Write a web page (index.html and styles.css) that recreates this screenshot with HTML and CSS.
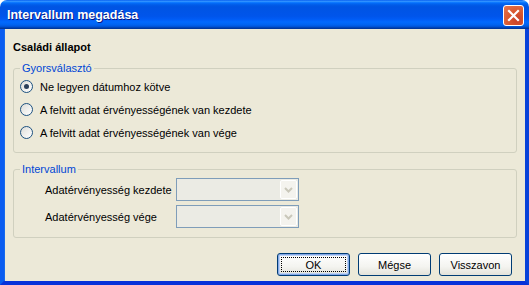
FILE: index.html
```html
<!DOCTYPE html>
<html lang="hu">
<head>
    <meta charset="UTF-8">
    <title>Intervallum megadása</title>
    <link rel="stylesheet" href="styles.css">
</head>
<body>
    <div class="window">
        <div class="titlebar">
            <span class="title">Intervallum megadása</span>
            <div class="close">
                <svg width="13" height="13" viewBox="0 0 13 13">
                    <path d="M2 2 L11 11 M11 2 L2 11" stroke="#fff" stroke-width="2.2" stroke-linecap="square"/>
                </svg>
            </div>
        </div>
        <div class="frame">
            <div class="heading">Családi állapot</div>

            <fieldset class="group">
                <legend>Gyorsválasztó</legend>
                <div class="radio-row">
                    <span class="radio checked"></span>
                    <span>Ne legyen dátumhoz kötve</span>
                </div>
                <div class="radio-row">
                    <span class="radio"></span>
                    <span>A felvitt adat érvényességének van kezdete</span>
                </div>
                <div class="radio-row">
                    <span class="radio"></span>
                    <span>A felvitt adat érvényességének van vége</span>
                </div>
            </fieldset>

            <fieldset class="group interval">
                <legend>Intervallum</legend>
                <div class="field-row">
                    <span class="field-label">Adatérvényesség kezdete</span>
                    <div class="combo">
                        <div class="combo-btn">
                            <svg width="9" height="6" viewBox="0 0 9 6">
                                <path d="M1 1 L4.5 4.5 L8 1" fill="none" stroke="#c9c7ba" stroke-width="2"/>
                            </svg>
                        </div>
                    </div>
                </div>
                <div class="field-row">
                    <span class="field-label">Adatérvényesség vége</span>
                    <div class="combo">
                        <div class="combo-btn">
                            <svg width="9" height="6" viewBox="0 0 9 6">
                                <path d="M1 1 L4.5 4.5 L8 1" fill="none" stroke="#c9c7ba" stroke-width="2"/>
                            </svg>
                        </div>
                    </div>
                </div>
            </fieldset>

            <div class="buttons">
                <button class="btn default"><span class="focus">OK</span></button>
                <button class="btn">Mégse</button>
                <button class="btn">Visszavon</button>
            </div>
        </div>
    </div>
</body>
</html>
```

FILE: styles.css
```css
body {
    margin: 0;
    background-color: #fff;
    font-family: "Liberation Sans", Arial, sans-serif;
    font-size: 11px;
    color: #000;
}

.window {
    width: 529px;
    height: 285px;
    display: flex;
    flex-direction: column;
}

/* barra de título estilo XP */
.titlebar {
    height: 29px;
    flex: none;
    display: flex;
    align-items: center;
    justify-content: space-between;
    padding: 0 5px 0 7px;
    border-radius: 7px 7px 0 0;
    background: linear-gradient(to bottom, #0058ee 0%, #3593ff 4%, #288eff 6%, #127dff 8%, #036ffc 10%, #0262ee 14%, #0057e5 20%, #0054e3 24%, #0055eb 56%, #005bf5 66%, #026afe 76%, #0062ef 86%, #0052d6 92%, #0040ab 96%, #003092 100%);
    box-sizing: border-box;
}

.title {
    font-family: "Liberation Sans", Arial, sans-serif;
    font-weight: bold;
    font-size: 12.5px;
    color: #fff;
    text-shadow: 1px 1px 0 #0a1883;
    margin-top: 1px;
}

.close {
    width: 19px;
    height: 19px;
    border: 1px solid #fff;
    border-radius: 3px;
    background: radial-gradient(circle at 70% 75%, #c8402a 0%, #d9582f 45%, #e57650 100%);
    display: flex;
    align-items: center;
    justify-content: center;
    margin-top: 1px;
}

.frame {
    flex: 1;
    background-color: #ece9d8;
    border-left: 4px solid #0a5cf0;
    border-right: 4px solid #0842d9;
    border-bottom: 4px solid #0831d9;
    box-shadow: inset 1px 0 0 #166aee;
    padding: 0 8px 0 9px;
    display: flex;
    flex-direction: column;
}

.heading {
    font-weight: bold;
    line-height: 13px;
    margin-top: 12px;
}

.group {
    margin: 8px 0 0 0;
    padding: 0 0 8px 6px;
    border: 1px solid #d0d0bf;
    border-radius: 3px;
    min-width: 0;
}

.group legend {
    color: #0046d5;
    padding: 0 2px;
    margin-left: 0;
    line-height: 13px;
}

.radio-row {
    display: flex;
    align-items: center;
    height: 23px;
    gap: 7px;
}

.radio {
    width: 11px;
    height: 11px;
    border: 1px solid #1c5180;
    border-radius: 50%;
    background: linear-gradient(135deg, #dcdcd7 0%, #f2f2f0 60%, #fff 100%);
    display: flex;
    align-items: center;
    justify-content: center;
}

.radio.checked::after {
    content: "";
    width: 5px;
    height: 5px;
    border-radius: 50%;
    background-color: #2a3f5a;
}

.interval {
    margin-top: 10px;
    padding: 3px 0 10px 6px;
}

.field-row {
    display: flex;
    align-items: center;
    height: 21px;
    padding-left: 25px;
}

.field-row + .field-row {
    margin-top: 6px;
}

.field-label {
    width: 131px;
}

.combo {
    width: 119px;
    height: 19px;
    border: 1px solid #7f9db9;
    background-color: #ebebe4;
    display: flex;
    justify-content: flex-end;
    padding: 1px;
    box-sizing: content-box;
}

.combo-btn {
    width: 15px;
    height: 17px;
    border: 1px solid #fff;
    border-radius: 2px;
    background-color: #f4f3ee;
    display: flex;
    align-items: center;
    justify-content: center;
}

.buttons {
    display: flex;
    justify-content: flex-end;
    gap: 8px;
    margin-top: 15px;
    padding-right: 5px;
}

.btn {
    width: 73px;
    height: 23px;
    border: 1px solid #003c74;
    border-radius: 3px;
    background: linear-gradient(to bottom, #fff 0%, #f4f4f0 60%, #e3e2da 100%);
    font-family: "Liberation Sans", Arial, sans-serif;
    font-size: 11px;
    color: #000;
    padding: 0;
}

.btn.default {
    box-shadow: inset 0 0 0 1px #86a9e8, inset 0 0 0 2px #bcd2f4;
    display: flex;
    padding: 3px;
}

.focus {
    flex: 1;
    border: 1px dotted #000;
    display: flex;
    align-items: center;
    justify-content: center;
}
```
